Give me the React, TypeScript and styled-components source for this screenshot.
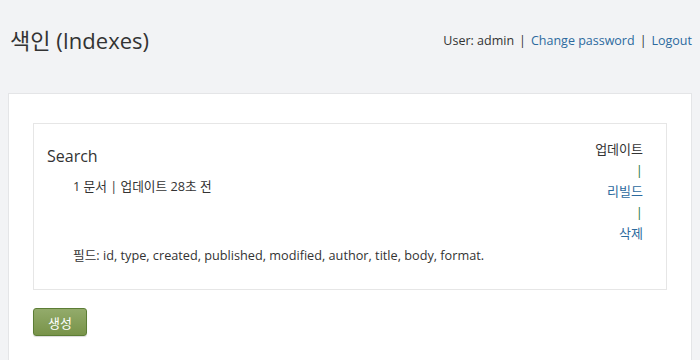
import React from "react";
import styled, { createGlobalStyle } from "styled-components";

const Global = createGlobalStyle`
  html, body { margin: 0; padding: 0; }
  body {
    background: #f2f3f5;
    font-family: "Open Sans", "Noto Sans CJK KR", sans-serif;
    color: #333;
    font-size: 13px;
  }
`;

const Header = styled.header`
  display: flex;
  justify-content: space-between;
  align-items: center;
  height: 93px;
  padding: 0 8px 0 10px;
  box-sizing: border-box;
`;

const Title = styled.h1`
  margin: 0 0 14px;
  font-size: 22px;
  font-weight: 400;
  color: #333;
  line-height: 30px;
`;

const UserBar = styled.div`
  margin-bottom: 13px;
  font-size: 12.5px;
  color: #333;
  display: flex;
  gap: 5px;
`;

const Link = styled.a`
  color: #2c6a9e;
  text-decoration: none;
`;

const Panel = styled.main`
  margin: 0 8px;
  background: #fff;
  border: 1px solid #e4e5e7;
  border-bottom: none;
  padding: 29px 24px 40px;
`;

const Card = styled.section`
  border: 1px solid #e6e6e6;
  display: flex;
  justify-content: space-between;
  padding: 14px 23px 23px 13px;
`;

const Left = styled.div`
  display: flex;
  flex-direction: column;
`;

const CardTitle = styled.h2`
  margin: 7px 0 0;
  font-size: 16px;
  font-weight: 400;
  line-height: 22px;
`;

const Info = styled.p<{ $top: number }>`
  margin: ${(p) => p.$top}px 0 0 26px;
  line-height: 22px;
  font-size: 12.7px;
`;

const Actions = styled.div`
  display: flex;
  flex-direction: column;
  align-items: flex-end;
  font-size: 13px;
  line-height: 21px;
  padding-top: 1px;
`;

const ActionLink = styled.a<{ $dark?: boolean }>`
  color: ${(p) => (p.$dark ? "#333" : "#2c6a9e")};
  text-decoration: none;
`;

const Sep = styled.span`
  color: #1f7a3a;
`;

const Button = styled.button`
  margin-top: 18px;
  width: 54px;
  height: 28px;
  border: 1px solid #5c7d35;
  border-radius: 3px;
  background: linear-gradient(#93ab6b, #789349);
  color: #fff;
  font-family: "Open Sans", "Noto Sans CJK KR", sans-serif;
  font-size: 13px;
  box-shadow: 0 1px 1px rgba(0, 0, 0, 0.15);
  cursor: pointer;
`;

export default function App() {
  return (
    <>
      <Global />
      <Header>
        <Title>색인 (Indexes)</Title>
        <UserBar>
          <span>User: admin</span>
          <span>|</span>
          <Link href="#">Change password</Link>
          <span>|</span>
          <Link href="#">Logout</Link>
        </UserBar>
      </Header>
      <Panel>
        <Card>
          <Left>
            <CardTitle>Search</CardTitle>
            <Info $top={8}>1 문서 | 업데이트 28초 전</Info>
            <Info $top={47}>
              필드: id, type, created, published, modified, author, title, body, format.
            </Info>
          </Left>
          <Actions>
            <ActionLink href="#" $dark>업데이트</ActionLink>
            <Sep>|</Sep>
            <ActionLink href="#">리빌드</ActionLink>
            <Sep>|</Sep>
            <ActionLink href="#">삭제</ActionLink>
          </Actions>
        </Card>
        <Button>생성</Button>
      </Panel>
    </>
  );
}
